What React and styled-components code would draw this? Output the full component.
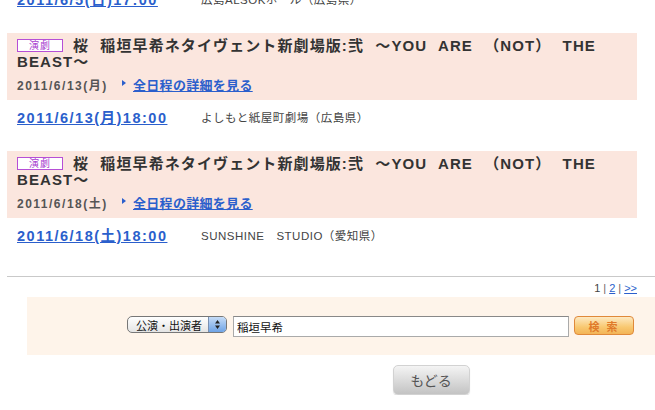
import React from 'react';
import styled, { createGlobalStyle } from 'styled-components';

const GlobalStyle = createGlobalStyle`
    body {
        margin: 0;
        background: #fff;
        font-family: "Liberation Sans", "Noto Sans CJK JP", sans-serif;
        color: #333;
    }
`;

const schedules = [
    {
        date: '2011/6/13(月)',
        time: '2011/6/13(月)18:00',
        venue: 'よしもと紙屋町劇場（広島県）',
    },
    {
        date: '2011/6/18(土)',
        time: '2011/6/18(土)18:00',
        venue: 'SUNSHINE　STUDIO（愛知県）',
    },
];

function App() {
    return (
        <Wrapper>
            <GlobalStyle />
            <div className="list">
                <Row>
                    <TimeLink href="#">2011/6/5(日)17:00</TimeLink>
                    <Venue>広島ALSOKホール（広島県）</Venue>
                </Row>
                {schedules.map((s) => (
                    <React.Fragment key={s.time}>
                        <Band>
                            <Title>
                                <Badge>演劇</Badge>
                                桜 稲垣早希ネタイヴェント新劇場版:弐 ～YOU ARE （NOT） THE BEAST～
                            </Title>
                            <DateLine>
                                <span>{s.date}</span>
                                <DetailLink href="#">全日程の詳細を見る</DetailLink>
                            </DateLine>
                        </Band>
                        <Row>
                            <TimeLink href="#">{s.time}</TimeLink>
                            <Venue>{s.venue}</Venue>
                        </Row>
                    </React.Fragment>
                ))}
            </div>
            <Divider />
            <Pager>
                1<Sep>|</Sep>
                <a href="#">2</a>
                <Sep>|</Sep>
                <a href="#">&gt;&gt;</a>
            </Pager>
            <SearchBox>
                <Select>
                    <span>公演・出演者</span>
                    <Arrows>
                        <svg width="7" height="11" viewBox="0 0 7 11">
                            <path d="M3.5 1 L6 4.5 H1 Z M3.5 10 L6 6.5 H1 Z" fill="#222" />
                        </svg>
                    </Arrows>
                </Select>
                <Input defaultValue="稲垣早希" />
                <SearchButton>検 索</SearchButton>
            </SearchBox>
            <Footer>
                <BackButton>もどる</BackButton>
            </Footer>
        </Wrapper>
    );
}

const Wrapper = styled.div`
    margin-top: -18px;
    width: 655px;
    overflow: hidden;

    .list {
        width: 630px;
        margin-left: 7px;
    }
`;

const Row = styled.div`
    height: 51px;
    display: flex;
    align-items: flex-start;
    padding: 9px 0 0 10px;
    box-sizing: border-box;
`;

const TimeLink = styled.a`
    width: 184px;
    font-size: 14.5px;
    font-weight: bold;
    color: #2b5fcc;
    text-decoration: underline;
    line-height: 18px;
    letter-spacing: 1.5px;
`;

const Venue = styled.span`
    font-size: 11.5px;
    color: #444;
    line-height: 18px;
    letter-spacing: 0.5px;
`;

const Band = styled.div`
    background: #fbe6de;
    height: 67px;
    box-sizing: border-box;
    padding: 5px 10px 0;
`;

const Title = styled.div`
    font-size: 15px;
    font-weight: bold;
    line-height: 16px;
    color: #333;
    letter-spacing: 1.1px;
    word-spacing: 6px;
`;

const Badge = styled.span`
    display: inline-block;
    width: 44px;
    height: 11px;
    line-height: 11px;
    border: 1px solid #b64fd6;
    background: #fff;
    color: #a93fd0;
    font-size: 10px;
    font-weight: normal;
    text-align: center;
    margin-right: 10px;
    vertical-align: 2px;
    letter-spacing: 1px;
`;

const DateLine = styled.div`
    margin-top: 5px;
    display: flex;
    align-items: center;
    font-size: 12px;
    font-weight: bold;
    color: #555;
    letter-spacing: 1.5px;

    span {
        width: 110px;
    }
`;

const DetailLink = styled.a`
    position: relative;
    margin-left: 6px;
    font-size: 13px;
    color: #2b5fcc;
    text-decoration: underline;
    letter-spacing: 0.3px;

    &::before {
        content: '';
        position: absolute;
        left: -11px;
        top: 5px;
        border-left: 4px solid #2b5fcc;
        border-top: 3.5px solid transparent;
        border-bottom: 3.5px solid transparent;
    }
`;

const Divider = styled.hr`
    margin: 7px 0 0 7px;
    border: none;
    border-top: 1px solid #c9c9c9;
    height: 0;
`;

const Pager = styled.div`
    width: 637px;
    text-align: right;
    font-size: 11px;
    color: #444;
    line-height: 13px;
    margin-top: 5px;

    a {
        color: #2b5fcc;
        text-decoration: underline;
    }
`;

const Sep = styled.span`
    color: #666;
    margin: 0 3px;
`;

const SearchBox = styled.div`
    margin: 2px 0 0 27px;
    height: 58px;
    background: #fef4ea;
    display: flex;
    align-items: flex-start;
    padding: 19px 0 0 100px;
    box-sizing: border-box;
    gap: 6px;
`;

const Select = styled.div`
    width: 100px;
    height: 17px;
    box-sizing: border-box;
    border: 1px solid #777;
    border-radius: 5px;
    background: linear-gradient(#fff, #e4e4e4);
    display: flex;
    align-items: center;
    font-size: 11px;
    color: #111;
    overflow: hidden;

    span {
        flex: 1;
        padding-left: 8px;
    }
`;

const Arrows = styled.div`
    width: 17px;
    height: 100%;
    background: linear-gradient(#c6dcf7, #6ea3e6);
    border-left: 1px solid #7a8fb0;
    display: flex;
    align-items: center;
    justify-content: center;
`;

const Input = styled.input`
    width: 336px;
    height: 21px;
    box-sizing: border-box;
    margin: 0;
    border: 1px solid #aaa;
    border-top-color: #888;
    padding: 0 3px;
    font-size: 11.5px;
    font-family: "Liberation Sans", "Noto Sans CJK JP", sans-serif;
    color: #111;
    outline: none;
`;

const SearchButton = styled.button`
    width: 60px;
    height: 19px;
    margin: 0 0 0 -1px;
    padding: 0;
    border: 1px solid #e0893a;
    border-radius: 4px;
    background: linear-gradient(#fde9c2, #f8c870 60%, #f3b457);
    color: #e07a2a;
    font-size: 11px;
    font-weight: bold;
    font-family: "Liberation Sans", "Noto Sans CJK JP", sans-serif;
    letter-spacing: 2px;
`;

const Footer = styled.div`
    display: flex;
    justify-content: center;
    padding: 10px 0 0 207px;
    box-sizing: border-box;
    width: 655px;
`;

const BackButton = styled.button`
    width: 77px;
    height: 30px;
    padding: 0;
    border: 1px solid #d2d2d2;
    border-radius: 5px;
    background: linear-gradient(#f4f4f4, #d9d9d9 55%, #c3c3c3);
    color: #555;
    font-size: 14px;
    font-family: "Liberation Sans", "Noto Sans CJK JP", sans-serif;
    box-shadow: 0 1px 1px rgba(0, 0, 0, 0.15);
`;

export default App;
